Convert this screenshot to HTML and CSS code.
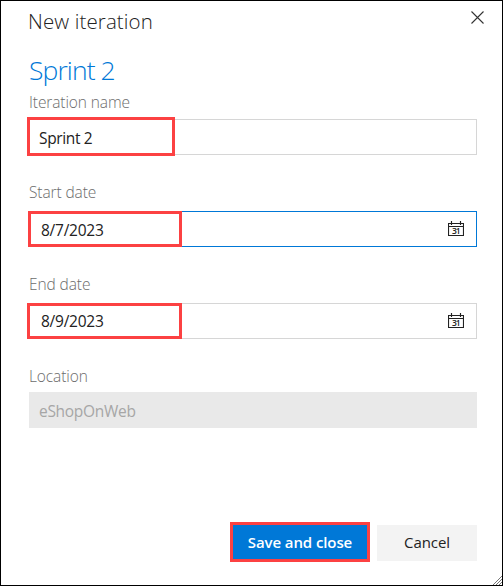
FILE: index.html
```html
<!DOCTYPE html>
<html lang="en">
<head>
<meta charset="utf-8">
<title>New iteration</title>
<link rel="stylesheet" href="styles.css">
</head>
<body>
<main class="dialog">
  <header class="header">
    <h1 class="title">New iteration</h1>
    <svg class="close" width="13" height="13" viewBox="0 0 13 13"><path d="M.5 .5l12 12M12.5 .5l-12 12"/></svg>
  </header>
  <h2 class="name">Sprint 2</h2>
  <section class="group first">
    <div class="label">Iteration name</div>
    <div class="field"><span class="value">Sprint 2</span><i class="mark mark-name"></i></div>
  </section>
  <section class="group">
    <div class="label">Start date</div>
    <div class="field active date"><span class="value">8/7/2023</span>
      <svg class="calendar" width="16" height="16" viewBox="0 0 16 16"><path d="M.5 2.5h15v12H.5zM.5 5.5h15M3.5 0v4M12.5 0v4"/><text x="4" y="13" textLength="8.5">31</text></svg>
      <i class="mark mark-start"></i></div>
  </section>
  <section class="group">
    <div class="label">End date</div>
    <div class="field date end"><span class="value">8/9/2023</span>
      <svg class="calendar" width="16" height="16" viewBox="0 0 16 16"><path d="M.5 2.5h15v12H.5zM.5 5.5h15M3.5 0v4M12.5 0v4"/><text x="4" y="13" textLength="8.5">31</text></svg>
      <i class="mark mark-end"></i></div>
  </section>
  <section class="group location">
    <div class="label">Location</div>
    <div class="field disabled"><span class="value">eShopOnWeb</span></div>
  </section>
  <footer class="actions">
    <button class="button primary">Save and close</button>
    <button class="button cancel">Cancel</button>
  </footer>
  <svg class="grip" width="9" height="9" viewBox="0 0 9 9"><path d="M0 9L9 0M3 9L9 3M6 9L9 6"/></svg>
</main>
</body>
</html>
```
FILE: styles.css
```css
* { box-sizing: border-box; }
body { margin: 0; font-family: "Open Sans", "Noto Sans", sans-serif; }
.dialog {
  position: relative;
  width: 503px;
  height: 586px;
  padding: 0 25px 0 28px;
  border: 1px solid #000;
  background: #fff;
  overflow: hidden;
}
.header { display: flex; justify-content: space-between; height: 40px; }
.title { margin: 0 0 0 -1px; font-size: 20.5px; line-height: 40px; font-weight: 300; color: #222; letter-spacing: .12px; white-space: nowrap; }
.close { margin: 10px -7px 0 0; fill: none; stroke: #333; stroke-width: 1.1; }
.name { margin: 11px 0 4px; font-size: 26.5px; line-height: 36px; font-weight: 300; color: #0078d7; letter-spacing: -.9px; }
.group { height: 65px; margin-bottom: 27px; display: flex; flex-direction: column; justify-content: space-between; }
.first { height: 63px; }
.label { font-size: 15.5px; line-height: 20px; font-weight: 350; color: #6c6c6c; letter-spacing: -.1px; }
.field {
  position: relative;
  display: flex;
  align-items: center;
  justify-content: space-between;
  height: 36px;
  padding: 2px 12px 0 9px;
  border: 1px solid #d6d6d6;
  font-size: 15.5px;
  line-height: 34px;
  color: #222;
}
.value { letter-spacing: -.35px; }
.active { border-color: #0078d7; }
.date { padding: 1px 12px 0 11px; }
.date .value { letter-spacing: -.25px; }
.end .value { margin-top: -1px; }
.calendar { margin-top: -2px; fill: none; stroke: #222; stroke-width: 1.15; }
.calendar text { fill: #222; stroke: none; font: 600 8.5px "Open Sans", sans-serif; }
.mark { position: absolute; border: 3px solid #fc4142; }
.mark-name { left: -3px; top: -3px; width: 148px; height: 39px; }
.mark-start { left: -2px; top: -1px; width: 154px; height: 36px; }
.mark-end { left: -3px; top: -1px; width: 155px; height: 36px; }
.location { height: 62px; margin: 0; }
.disabled { border-color: #e9e9e9; background: #e9e9e9; color: #a6a6a6; }
.disabled .value { letter-spacing: -.3px; }
.actions { display: flex; justify-content: flex-end; align-items: center; gap: 7px; height: 40px; margin-top: 94px; }
.button { padding: 0; border: 0; font-family: inherit; font-size: 15px; white-space: nowrap; }
.primary { width: 140px; height: 40px; border: 3px solid #fc4142; background: #0078d7; color: #fff; font-weight: 600; letter-spacing: -.1px; }
.cancel { width: 100px; height: 36px; margin-top: 1px; padding-bottom: 2px; background: #f3f3f3; color: #222; letter-spacing: -.1px; }
.grip { position: absolute; right: 0; bottom: 0; stroke: #777; fill: none; }
```
